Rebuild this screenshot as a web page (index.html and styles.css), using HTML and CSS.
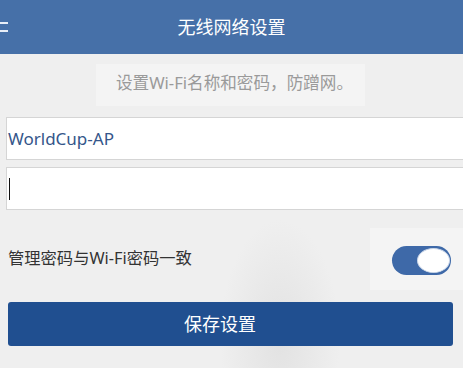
FILE: index.html
```html
<!DOCTYPE html>
<html lang="zh-CN">
<head>
  <meta charset="UTF-8" />
  <meta name="viewport" content="width=device-width, initial-scale=1.0"/>
  <title>无线网络设置</title>
  <link rel="stylesheet" href="styles.css">
</head>
<body>
  <header class="topbar">
    <span class="menu-icon"><i></i><i></i></span>
    <h1>无线网络设置</h1>
    <span></span>
  </header>

  <div class="page">
    <p class="tip">设置Wi-Fi名称和密码，防蹭网。</p>

    <div class="field"><span class="value">WorldCup-AP</span></div>
    <div class="field"><span class="caret"></span></div>

    <div class="row">
      <span class="label">管理密码与Wi-Fi密码一致</span>
      <span class="switch-wrap">
        <span class="switch on"><span class="knob"></span></span>
      </span>
    </div>

    <button class="save">保存设置</button>
  </div>
</body>
</html>
```

FILE: styles.css
```css
html, body { height: 100%; }
body { margin: 0; overflow: hidden; font-family: "Noto Sans", "Noto Sans CJK SC", sans-serif; background: radial-gradient(ellipse 60px 120px at 280px 340px, #e2e2e2, rgba(239,239,239,0)), #efefef; }

.topbar { height: 54px; background: #4670a8; color: #fff; display: grid; grid-template-columns: 1fr auto 1fr; align-items: center; }
.topbar h1 { margin: 0; font-size: 18px; font-weight: normal; line-height: 54px; }
.menu-icon { display: flex; flex-direction: column; gap: 6px; width: 8px; }
.menu-icon i { display: block; height: 2px; background: #e8eef7; }

.page { padding: 0 10px 0 8px; }
.tip { width: 261px; height: 42px; margin: 10px auto 11px; padding-left: 8px; background: #f4f4f4; color: #9a9a9a; font-size: 16.6px; line-height: 38px; text-align: center; }

.field { height: 43px; box-sizing: border-box; margin: 0 -10px 7px -2px; padding-left: 1px; background: #fff; border: 1px solid #d5d5d5; border-right: none; display: flex; align-items: center; }
.value { font-size: 17px; color: #34568a; }
.caret { width: 1px; height: 22px; margin-left: 1px; background: #111; }

.row { display: flex; align-items: center; justify-content: space-between; margin-top: 18px; }
.label { font-size: 16.3px; color: #333; padding-bottom: 5px; }
.switch-wrap { background: #f4f4f4; padding: 18px 12px 15px 22px; margin-right: -10px; }
.switch { display: flex; width: 59px; height: 29px; box-sizing: border-box; border-radius: 15px; background: #3e69a8; padding: 2px 1px; justify-content: flex-end; }
.knob { width: 33px; height: 25px; box-sizing: border-box; border-radius: 50%; background: #fff; border: 1px solid #c9d5e7; }

.save { display: block; width: 100%; height: 44px; margin-top: 12px; padding: 0 21px 2px 0; border: none; border-radius: 3px; background: #204f90; color: #fff; font-family: inherit; font-size: 18px; }
```
